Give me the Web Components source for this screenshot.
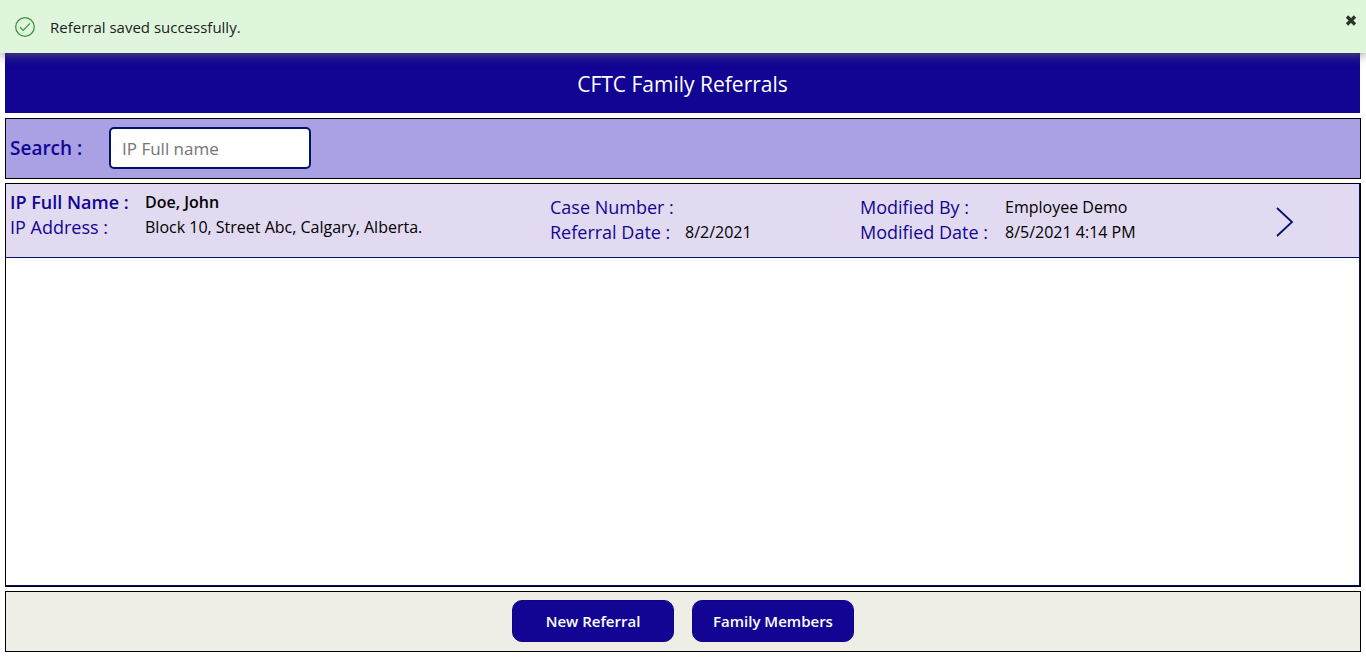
<!DOCTYPE html>
<html lang="en">
<head>
<meta charset="utf-8">
<meta name="viewport" content="width=device-width, initial-scale=1">
<title>CFTC Family Referrals</title>
<style>
  body { margin: 0; background: #fff; color: #000; font-family: "Open Sans", "Noto Sans", sans-serif; --brand: #120594; --ink: #00126b; }
</style>
</head>
<body>
<referral-app></referral-app>
<script>
class BaseElement extends HTMLElement {
  connectedCallback() {
    if (this.shadowRoot) return;
    this.attachShadow({ mode: 'open' }).innerHTML = '<style>*{box-sizing:border-box}</style>' + this.render();
  }
}

customElements.define('success-toast', class extends BaseElement {
  render() {
    return `
    <style>
      :host { display: flex; align-items: center; gap: 15px; padding: 0 8px 0 15px; height: 53px; box-sizing: border-box;
        background: #dff6dd; color: #1c1c1c; font-size: 15px; line-height: 22px;
        box-shadow: 0 2px 10px rgba(102,102,102,.7); position: relative; z-index: 1; }
      .text { flex: 1; }
      button { align-self: flex-start; margin-top: 15px; border: 0; padding: 0; background: none; height: 12px; width: 14px; }
      svg { display: block; }
    </style>
    <svg width="20" height="20" viewBox="0 0 20 20" fill="none" stroke="#3a963a" stroke-width="1.3" aria-hidden="true"><circle cx="10" cy="10" r="9.3"/><path d="M5 10.2l3.2 3.2L15 6.4"/></svg>
    <span class="text" role="status"><slot></slot></span>
    <button type="button" aria-label="Close"><svg width="14" height="12" viewBox="0 0 14 12" stroke="#2b332b" stroke-width="3.2"><path d="M3 1.5l8 8M11 1.5l-8 8"/></svg></button>`;
  }
});

customElements.define('page-title', class extends BaseElement {
  render() {
    return `
    <style>
      :host { display: block; margin: 0 1px 1px 0; padding: 16px 0 14px; background: var(--brand); color: #fff; text-align: center; }
      h1 { margin: 0; font-size: 21px; line-height: 30px; font-weight: 400; }
    </style>
    <h1><slot></slot></h1>`;
  }
});

customElements.define('search-bar', class extends BaseElement {
  render() {
    return `
    <style>
      :host { display: flex; align-items: center; box-sizing: border-box; border: 1px solid #000; background: #a9a1e3; padding: 8px 4px 9px; }
      label { width: 99px; color: var(--brand); font-size: 19px; line-height: 26px; font-weight: 600; }
      input { width: 202px; height: 42px; border: 2px solid var(--ink); border-radius: 5px; padding: 0 11px; background: #fff; color: #000; font: 400 17px "Open Sans", sans-serif; outline: 0; }
      input::placeholder { color: #757575; opacity: 1; }
    </style>
    <label for="q">Search :</label><input id="q" type="text" placeholder="IP Full name">`;
  }
});

customElements.define('referral-field', class extends BaseElement {
  render() {
    return `
    <style>
      :host { display: flex; font-size: 16px; line-height: 25px; }
      .label { flex: none; width: var(--label-width, 135px); color: var(--brand); font-size: 18px; font-weight: 500; white-space: nowrap; }
      :host([strong]) .label, :host([strong]) .value { font-weight: 600; }
    </style>
    <span class="label">${this.getAttribute('label')}</span><span class="value"><slot></slot></span>`;
  }
});

customElements.define('referral-row', class extends BaseElement {
  render() {
    return `
    <style>
      :host { display: grid; grid-template-columns: 540fr 310fr 412fr 87fr; padding: 6px 0 5px 4px; height: 74px; box-sizing: border-box; background: #e2daf0; border-bottom: 1px solid var(--ink); }
      .col { padding-top: 5px; }
      .person { padding-top: 0; }
      .modified { --label-width: 145px; }
      button { align-self: end; justify-self: start; border: 0; padding: 0; background: none; margin: 0 0 14px 4px; }
      svg { display: block; }
    </style>
    <div class="col person"><slot name="person"></slot></div>
    <div class="col"><slot name="case"></slot></div>
    <div class="col modified"><slot name="modified"></slot></div>
    <button type="button" aria-label="Open referral"><svg width="18" height="32" viewBox="0 0 18 32" fill="none" stroke="#00126b" stroke-width="1.8"><path d="M1 2l15 14L1 30"/></svg></button>`;
  }
});

customElements.define('referral-list', class extends BaseElement {
  render() {
    return `
    <style>
      :host { display: flex; flex: 1; border: 1px solid #000; box-sizing: border-box; }
      .inner { flex: 1; border: solid var(--ink); border-width: 0 1px 1px 0; }
    </style>
    <div class="inner"><slot></slot></div>`;
  }
});

customElements.define('action-button', class extends BaseElement {
  render() {
    return `
    <style>
      :host { display: block; }
      button { width: 162px; height: 42px; border: 1px solid #10057f; border-radius: 10px; background: var(--brand); color: #fff; font: 600 15px "Open Sans", sans-serif; padding: 0; }
    </style>
    <button type="button"><slot></slot></button>`;
  }
});

customElements.define('action-bar', class extends BaseElement {
  render() {
    return `
    <style>
      :host { display: flex; justify-content: center; gap: 18px; padding: 8px 0 9px; border: 1px solid #000; box-sizing: border-box; background: #eeeee6; }
    </style>
    <slot></slot>`;
  }
});

customElements.define('referral-app', class extends BaseElement {
  render() {
    return `
    <style>
      :host { display: flex; flex-direction: column; min-height: 100vh; }
      main { flex: 1; display: flex; flex-direction: column; gap: 4px; padding: 0 5px 5px; }
      [slot="modified"] { --label-width: 145px; }
    </style>
    <success-toast>Referral saved successfully.</success-toast>
    <main>
      <page-title>CFTC Family Referrals</page-title>
      <search-bar></search-bar>
      <referral-list>
        <referral-row>
          <referral-field slot="person" label="IP Full Name :" strong>Doe, John</referral-field>
          <referral-field slot="person" label="IP Address :">Block 10, Street Abc, Calgary, Alberta.</referral-field>
          <referral-field slot="case" label="Case Number :"></referral-field>
          <referral-field slot="case" label="Referral Date :">8/2/2021</referral-field>
          <referral-field slot="modified" label="Modified By :">Employee Demo</referral-field>
          <referral-field slot="modified" label="Modified Date :">8/5/2021 4:14 PM</referral-field>
        </referral-row>
      </referral-list>
      <action-bar>
        <action-button>New Referral</action-button>
        <action-button>Family Members</action-button>
      </action-bar>
    </main>`;
  }
});
</script>
</body>
</html>
